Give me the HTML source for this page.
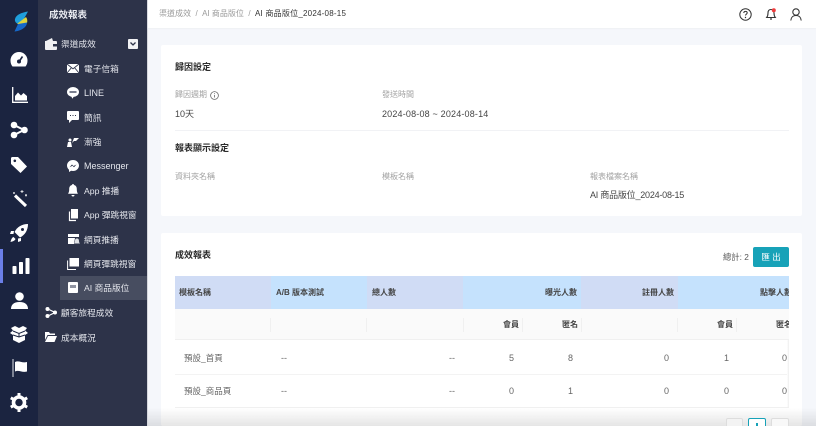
<!DOCTYPE html>
<html><head><meta charset="utf-8">
<style>
html,body{margin:0;padding:0;width:816px;height:426px;overflow:hidden;background:#f5f7fb}
body{position:relative;font-family:"Liberation Sans","Noto Sans CJK TC",sans-serif;font-size:9px;color:#3a3a3a}
#r{position:absolute;left:0;top:0;width:816px;height:426px;overflow:hidden;filter:blur(.35px)}
.a{position:absolute;white-space:nowrap}
.t{position:absolute;white-space:nowrap;line-height:12px;height:12px}
.n{color:#e4e6ec;font-size:8.700px}
.g{color:#a2a2a2;font-size:8px}
.h{color:#2c2c2c;font-size:9px;font-weight:700}
.b{color:#444;font-size:8px;font-weight:700}
.c{color:#666;font-size:9px}
svg{position:absolute;overflow:visible}
</style></head><body><div id="r">
<!-- sidebars -->
<div class="a" style="left:0;top:0;width:38px;height:426px;background:#1b2440"></div>
<div class="a" style="left:38px;top:0;width:109px;height:426px;background:#2d3349"></div>
<div class="a" style="left:147px;top:0;width:1px;height:426px;background:#d5d7dd"></div>
<div class="a" style="left:0;top:249px;width:3px;height:34px;background:#6b7fe8"></div>
<div class="a" style="left:60px;top:276px;width:87px;height:24px;background:#474d60"></div>

<!-- logo -->
<svg style="left:14px;top:11px" width="15" height="21" viewBox="0 0 15 21">
<path d="M14 0.500C8 1.500 2 3.500 1 8 C0.500 10.500 2 12 4 13 L9 9.500 L14 0.500Z" fill="#1f9fdc"/>
<path d="M3.500 12.500 L12 6 C13.500 8 13.500 10 13 12 L4 13.500Z" fill="#e0d43c"/>
<path d="M4 13 L13 11.500 C13 16 7 20 0.500 20.500 L4 13Z" fill="#1668c8"/>
</svg>
<!-- rail icons -->
<svg style="left:10px;top:51px" width="18" height="17" viewBox="0 0 18 17"><path d="M9 1a8.500 8.500 0 0 0-8.500 8.500c0 2.500.7 4.500 2 6h13c1.300-1.500 2-3.500 2-6A8.500 8.500 0 0 0 9 1z" fill="#fff"/><path d="M12.500 5.500 9.800 9.500" stroke="#1b2440" stroke-width="1.600"/><circle cx="9" cy="10.500" r="2" fill="#1b2440"/></svg>
<svg style="left:12px;top:87px" width="16" height="16" viewBox="0 0 16 16"><path d="M.7 0v15.300H16" fill="none" stroke="#fff" stroke-width="1.300"/><path d="M3 13.500V9l3-3.500 3 3 2.500-2.500L15 9v4.500z" fill="#fff"/></svg>
<svg style="left:10px;top:121px" width="18" height="18" viewBox="0 0 18 18"><g stroke="#fff" stroke-width="2" fill="none"><path d="M4 4l10 5-10 5"/></g><circle cx="4" cy="4" r="3.300" fill="#fff"/><circle cx="14.500" cy="9" r="3.300" fill="#fff"/><circle cx="4" cy="14" r="3.300" fill="#fff"/></svg>
<svg style="left:10px;top:156px" width="18" height="18" viewBox="0 0 18 18"><path d="M1 2.500A1.500 1.500 0 0 1 2.500 1H8l9 9.500-6.500 6.500L1 8z" fill="#fff"/><circle cx="4.800" cy="4.800" r="1.300" fill="#1b2440"/></svg>
<svg style="left:12px;top:190px" width="16" height="17" viewBox="0 0 16 17"><path d="M3 5.500 14 16" stroke="#fff" stroke-width="3"/><path d="M10 0v3M8.500 1.500h3M14 4v2.500M13 5.200h2M2 2v2M1 3h2" stroke="#fff" stroke-width=".8"/></svg>
<svg style="left:10px;top:224px" width="18" height="18" viewBox="0 0 18 18"><path d="M18 0C12 0 7 3 4.500 8l5.500 5.500C15 11 18 6 18 0z" fill="#fff"/><path d="M4 7H1L0 10l3.500 0zM11 14v3l-3 1 0-3.500zM3.500 13c-1.500.5-2.500 2.500-3 5 2.500-.5 4.500-1.500 5-3z" fill="#fff"/><circle cx="12.500" cy="5.500" r="1.500" fill="#1b2440"/></svg>
<svg style="left:12px;top:258px" width="18" height="16" viewBox="0 0 18 16"><rect x="0.500" y="8" width="4" height="8" rx=".8" fill="#fff"/><rect x="7" y="4" width="4" height="12" rx=".8" fill="#fff"/><rect x="13.500" y="0" width="4" height="16" rx=".8" fill="#fff"/></svg>
<svg style="left:11px;top:292px" width="17" height="17" viewBox="0 0 17 17"><circle cx="8.500" cy="4.500" r="4.300" fill="#fff"/><path d="M0 17c0-4 2.500-7 8.500-7s8.500 3 8.500 7z" fill="#fff"/></svg>
<svg style="left:10px;top:326px" width="18" height="17" viewBox="0 0 18 17"><path d="M1 2l4-2 4 2 4-2 4 2-2 2.500 3 2.500-3 2v5l-6 3-6-3V9L0 7l3-2.500z" fill="#fff"/><path d="M3 5l6 2.500L15 5M3 9l6 2 6-2M9 7.500V11" stroke="#1b2440" stroke-width="1" fill="none"/></svg>
<svg style="left:12px;top:359px" width="16" height="19" viewBox="0 0 16 19"><path d="M1 0v18" stroke="#bfc3cc" stroke-width="1.200"/><path d="M3 3c4-2 7 1.500 12 0v9.500c-5 1.500-8-2-12 0z" fill="#fff"/></svg>
<svg style="left:10px;top:393px" width="18" height="19" viewBox="0 0 18 19"><circle cx="9" cy="9.500" r="5.500" fill="none" stroke="#fff" stroke-width="3.600"/><g stroke="#fff" stroke-width="3"><path d="M9 0v3M9 16v3M.8 4.800l2.600 1.500M14.600 12.700l2.600 1.500M.8 14.200l2.600-1.500M14.600 6.300l2.600-1.500"/></g></svg>

<!-- menu -->
<div class="t" style="left:49px;top:9px;color:#e8eaf0;font-size:9.500px;font-weight:700;line-height:13px">成效報表</div>
<svg style="left:45px;top:38px" width="12" height="12" viewBox="0 0 12 12"><path d="M0 3h11a1 1 0 0 1 1 1v7a1 1 0 0 1-1 1H1a1 1 0 0 1-1-1zM1 3l6-3 1 3z" fill="#f0f0f2"/><rect x="8" y="6" width="4" height="2.500" fill="#2d3349"/></svg>
<div class="t n" style="left:61px;top:38px">渠道成效</div>
<div class="a" style="left:128px;top:39px;width:10px;height:10px;background:#f2f3f5;border-radius:1px"></div>
<svg style="left:130px;top:42px" width="6" height="4" viewBox="0 0 6 4"><path d="M.5.500 3 3 5.500.5" stroke="#2d3349" stroke-width="1.300" fill="none"/></svg>

<svg style="left:67px;top:64px" width="12" height="9" viewBox="0 0 12 9"><rect width="12" height="9" fill="#fff"/><path d="M0 0l6 4.800L12 0M0 9l4.200-5M12 9 7.800 4" stroke="#2d3349" stroke-width=".9" fill="none"/></svg>
<div class="t n" style="left:84px;top:63px">電子信箱</div>
<svg style="left:67px;top:87px" width="12" height="12" viewBox="0 0 12 12"><ellipse cx="6" cy="5" rx="6" ry="5" fill="#fff"/><path d="M4 9h3l-1.500 2.800z" fill="#fff"/><path d="M2.500 4h7v2h-7z" fill="#7a7f8f"/></svg>
<div class="t n" style="left:84px;top:87px;font-size:9px">LINE</div>
<svg style="left:67px;top:111px" width="12" height="12" viewBox="0 0 12 12"><path d="M1 0h10a1 1 0 0 1 1 1v7a1 1 0 0 1-1 1H5l-3 3V9H1a1 1 0 0 1-1-1V1a1 1 0 0 1 1-1z" fill="#fff"/><path d="M3 4.500h1M5.500 4.500h1M8 4.500h1" stroke="#2d3349"/></svg>
<div class="t n" style="left:84px;top:112px">簡訊</div>
<svg style="left:67px;top:138px" width="12" height="9" viewBox="0 0 12 9"><path d="M0 9 1 4h3l1 5zM5 5 7 0h5L9 3H7z" fill="#fff"/><circle cx="3" cy="2" r="1.500" fill="#fff"/></svg>
<div class="t n" style="left:84px;top:136px">漸強</div>
<svg style="left:67px;top:160px" width="12" height="12" viewBox="0 0 12 12"><path d="M6 0C2.700 0 0 2.400 0 5.500c0 1.700.8 3.200 2 4.200V12l2.100-1.200c.6.200 1.200.2 1.900.2 3.300 0 6-2.400 6-5.500S9.300 0 6 0z" fill="#fff"/><path d="M2.500 7.300 5 4.500l1.500 1.500 3-1.500-2.500 2.800L5.500 5.800z" fill="#2d3349"/></svg>
<div class="t n" style="left:84px;top:160px;font-size:9px">Messenger</div>
<svg style="left:68px;top:184px" width="10" height="13" viewBox="0 0 10 13"><path d="M5 0c.6 0 1 .4 1 1 2 .5 2.800 2 2.800 4 0 2.500.4 3.500 1.200 4.800H0C.8 8.500 1.200 7.500 1.200 5c0-2 .8-3.500 2.800-4 0-.6.400-1 1-1z" fill="#fff"/><path d="M3.500 11h3a1.500 1.500 0 0 1-3 0z" fill="#fff"/></svg>
<div class="t n" style="left:84px;top:185px">App 推播</div>
<svg style="left:68px;top:209px" width="10" height="12" viewBox="0 0 10 12"><rect x="3" width="7" height="9.500" fill="#fff"/><path d="M1.500 2.500v9H8" stroke="#fff" stroke-width="1.200" fill="none"/></svg>
<div class="t n" style="left:84px;top:209px">App 彈跳視窗</div>
<svg style="left:68px;top:234px" width="12" height="12" viewBox="0 0 12 12"><path d="M0 0h11v3H0zM0 4h7l-1 6H0z" fill="#fff"/><path d="M9 4.500c1.500 0 2 1 2 2.500 0 1 .4 2 1 2.500H6c.6-.5 1-1.500 1-2.500 0-1.500.5-2.500 2-2.500z" fill="#dfe1e6"/></svg>
<div class="t n" style="left:84px;top:234px">網頁推播</div>
<svg style="left:67px;top:258px" width="12" height="12" viewBox="0 0 12 12"><rect x="2.500" width="9.500" height="8.500" fill="#fff"/><path d="M.6 2.500v9H9" stroke="#fff" stroke-width="1" fill="none"/></svg>
<div class="t n" style="left:84px;top:258px">網頁彈跳視窗</div>
<svg style="left:68px;top:282px" width="10" height="12" viewBox="0 0 10 12"><rect width="10" height="11" rx="1" fill="#fff"/><rect x="2" y="3" width="6" height="3" fill="#9094a2"/></svg>
<div class="t n" style="left:84px;top:282px">AI 商品版位</div>
<svg style="left:45px;top:307px" width="12" height="11" viewBox="0 0 12 11"><path d="M3 2l7 3.500L3 9" stroke="#fff" stroke-width="1.200" fill="none"/><circle cx="2.500" cy="2" r="2" fill="#fff"/><circle cx="10" cy="5.500" r="2" fill="#fff"/><circle cx="2.500" cy="9" r="2" fill="#fff"/></svg>
<div class="t n" style="left:61px;top:307px">顧客旅程成效</div>
<svg style="left:45px;top:332px" width="12" height="10" viewBox="0 0 12 10"><path d="M0 0h4l1 1.500h5V3H2.500L0 8z" fill="#fff"/><path d="M3 4h9l-2.500 6H0z" fill="#fff"/></svg>
<div class="t n" style="left:61px;top:332px">成本概況</div>

<!-- topbar -->
<div class="a" style="left:148px;top:0;width:668px;height:28px;background:#fff;box-shadow:0 1px 1px #eef0f4"></div>
<div class="t g" style="left:159px;top:8px;color:#9a9a9a">渠道成效&nbsp; /&nbsp; AI 商品版位&nbsp; /</div>
<div class="t" style="left:255px;top:8px;font-size:8px;color:#333;letter-spacing:.22px">AI 商品版位_2024-08-15</div>
<svg style="left:739px;top:8px" width="13" height="13" viewBox="0 0 13 13"><circle cx="6.500" cy="6.500" r="5.700" fill="none" stroke="#333" stroke-width="1"/><path d="M4.800 5c0-1 .8-1.600 1.700-1.600s1.700.6 1.700 1.500c0 1.300-1.700 1.300-1.700 2.600" fill="none" stroke="#333" stroke-width="1"/><circle cx="6.500" cy="9.500" r=".7" fill="#333"/></svg>
<svg style="left:766px;top:8px" width="11" height="13" viewBox="0 0 11 13"><path d="M5 1.500C3 1.500 2 3 2 5c0 2.500-.5 3.500-1.300 4.500h8.600C8.500 8.500 8 7.500 8 5c0-2-1-3.500-3-3.500z" fill="none" stroke="#333" stroke-width="1.100"/><path d="M4 11h2" stroke="#333" stroke-width="1.200"/><circle cx="7.800" cy="2.200" r="2" fill="#ef3b3b"/></svg>
<svg style="left:790px;top:8px" width="12" height="13" viewBox="0 0 12 13"><circle cx="6" cy="4" r="3.200" fill="none" stroke="#333" stroke-width="1.100"/><path d="M.8 12.500C1 9.500 3 7.500 6 7.500s5 2 5.200 5" fill="none" stroke="#333" stroke-width="1.100"/></svg>

<!-- card 1 -->
<div class="a" style="left:161px;top:45px;width:641px;height:171px;background:#fff;border-radius:2px"></div>
<div class="t h" style="left:175px;top:61px">歸因設定</div>
<div class="t g" style="left:175px;top:89px">歸因週期</div>
<svg style="left:210px;top:91px" width="9" height="9" viewBox="0 0 9 9"><circle cx="4.500" cy="4.500" r="3.900" fill="none" stroke="#666" stroke-width=".8"/><path d="M4.500 4v2.500M4.500 2.300v.8" stroke="#666" stroke-width=".8"/></svg>
<div class="t g" style="left:382px;top:89px">發送時間</div>
<div class="t" style="left:175px;top:108px;color:#444">10天</div>
<div class="t" style="left:382px;top:108px;color:#444;letter-spacing:.18px">2024-08-08 ~ 2024-08-14</div>
<div class="a" style="left:175px;top:130px;width:614px;height:1px;background:#f1f2f5"></div>
<div class="t h" style="left:175px;top:142px">報表顯示設定</div>
<div class="t g" style="left:175px;top:171px">資料夾名稱</div>
<div class="t g" style="left:382px;top:171px">模板名稱</div>
<div class="t g" style="left:590px;top:171px">報表檔案名稱</div>
<div class="t" style="left:590px;top:189px;color:#444;letter-spacing:-.22px">AI 商品版位_2024-08-15</div>

<!-- card 2 -->
<div class="a" style="left:161px;top:233px;width:641px;height:193px;background:#fff;border-radius:2px"></div>
<div class="t h" style="left:175px;top:249px">成效報表</div>
<div class="t" style="left:723px;top:251px;font-size:8.300px;color:#555">總計: 2</div>
<div class="a" style="left:753px;top:247px;width:36px;height:20px;background:#17a2b8;border-radius:2px;color:#fff;font-size:8.500px;line-height:20px;text-align:center">匯 出</div>

<!-- table -->
<div class="a" style="left:175px;top:276px;width:614px;height:33px;background:#c5e2fd;overflow:hidden"></div>
<div class="a" style="left:175px;top:276px;width:96px;height:33px;background:#d0dcf5"></div>
<div class="a" style="left:367px;top:276px;width:96px;height:33px;background:#d0dcf5"></div>
<div class="a" style="left:581px;top:276px;width:97px;height:33px;background:#d0dcf5"></div>
<div class="a" style="left:175px;top:309px;width:614px;height:31px;background:#fafafa;border-bottom:1px solid #f0f0f0;box-sizing:border-box"></div>
<div class="a" style="left:270px;top:318px;width:1px;height:14px;background:#f0f0f0"></div>
<div class="a" style="left:366px;top:318px;width:1px;height:14px;background:#f0f0f0"></div>
<div class="a" style="left:463px;top:318px;width:1px;height:14px;background:#f0f0f0"></div>
<div class="a" style="left:522px;top:318px;width:1px;height:14px;background:#f0f0f0"></div>
<div class="a" style="left:581px;top:318px;width:1px;height:14px;background:#f0f0f0"></div>
<div class="a" style="left:677px;top:318px;width:1px;height:14px;background:#f0f0f0"></div>
<div class="a" style="left:736px;top:318px;width:1px;height:14px;background:#f0f0f0"></div>
<div class="a" style="left:175px;top:374px;width:614px;height:1px;background:#f3f3f3"></div>
<div class="a" style="left:175px;top:407px;width:614px;height:1px;background:#f0f0f0"></div>

<div class="t b" style="left:179px;top:287px">模板名稱</div>
<div class="t b" style="left:276px;top:287px">A/B 版本測試</div>
<div class="t b" style="left:372px;top:287px">總人數</div>
<div class="t b" style="left:545px;top:287px">曝光人數</div>
<div class="t b" style="left:642px;top:287px">註冊人數</div>
<div class="a" style="left:175px;top:276px;width:614px;height:64px;overflow:hidden">
<div class="t b" style="left:585px;top:11px">點擊人數</div>
<div class="t b" style="left:601px;top:43px">匿名</div>
</div>
<div class="t b" style="left:503px;top:319px">會員</div>
<div class="t b" style="left:562px;top:319px">匿名</div>
<div class="t b" style="left:717px;top:319px">會員</div>

<div class="t c" style="left:184px;top:352px;font-size:8.500px">預設_首頁</div>
<div class="t c" style="left:184px;top:385px;font-size:8.500px">預設_商品頁</div>
<div class="t c" style="left:281px;top:352px">--</div><div class="t c" style="left:281px;top:385px">--</div>
<div class="t c" style="left:449px;top:352px">--</div><div class="t c" style="left:449px;top:385px">--</div>
<div class="t c" style="left:509px;top:352px">5</div><div class="t c" style="left:509px;top:385px">0</div>
<div class="t c" style="left:568px;top:352px">8</div><div class="t c" style="left:568px;top:385px">1</div>
<div class="t c" style="left:664px;top:352px">0</div><div class="t c" style="left:664px;top:385px">0</div>
<div class="t c" style="left:724px;top:352px">1</div><div class="t c" style="left:724px;top:385px">0</div>
<div class="t c" style="left:782px;top:352px">0</div><div class="t c" style="left:782px;top:385px">0</div>
<div class="a" style="left:787px;top:340px;width:2px;height:67px;background:linear-gradient(90deg,#fff,#eee)"></div>

<!-- bottom shade and pagination -->
<div class="a" style="left:148px;top:408px;width:668px;height:18px;background:linear-gradient(180deg,rgba(0,0,0,0) 0%,rgba(0,0,0,.10) 100%)"></div>
<div class="a" style="left:726px;top:418px;width:17px;height:17px;border:1px solid #ddd;border-radius:2px;box-sizing:border-box;background:#f3f3f3"></div>
<div class="a" style="left:748px;top:418px;width:18px;height:17px;border:1px solid #17a2b8;border-radius:2px;box-sizing:border-box;background:#fff"></div>
<div class="a" style="left:771px;top:418px;width:18px;height:17px;border:1px solid #ddd;border-radius:2px;box-sizing:border-box;background:#f8f8f8"></div>
<div class="a" style="left:756px;top:423px;width:2px;height:3px;background:#17a2b8"></div>
</div></body></html>
